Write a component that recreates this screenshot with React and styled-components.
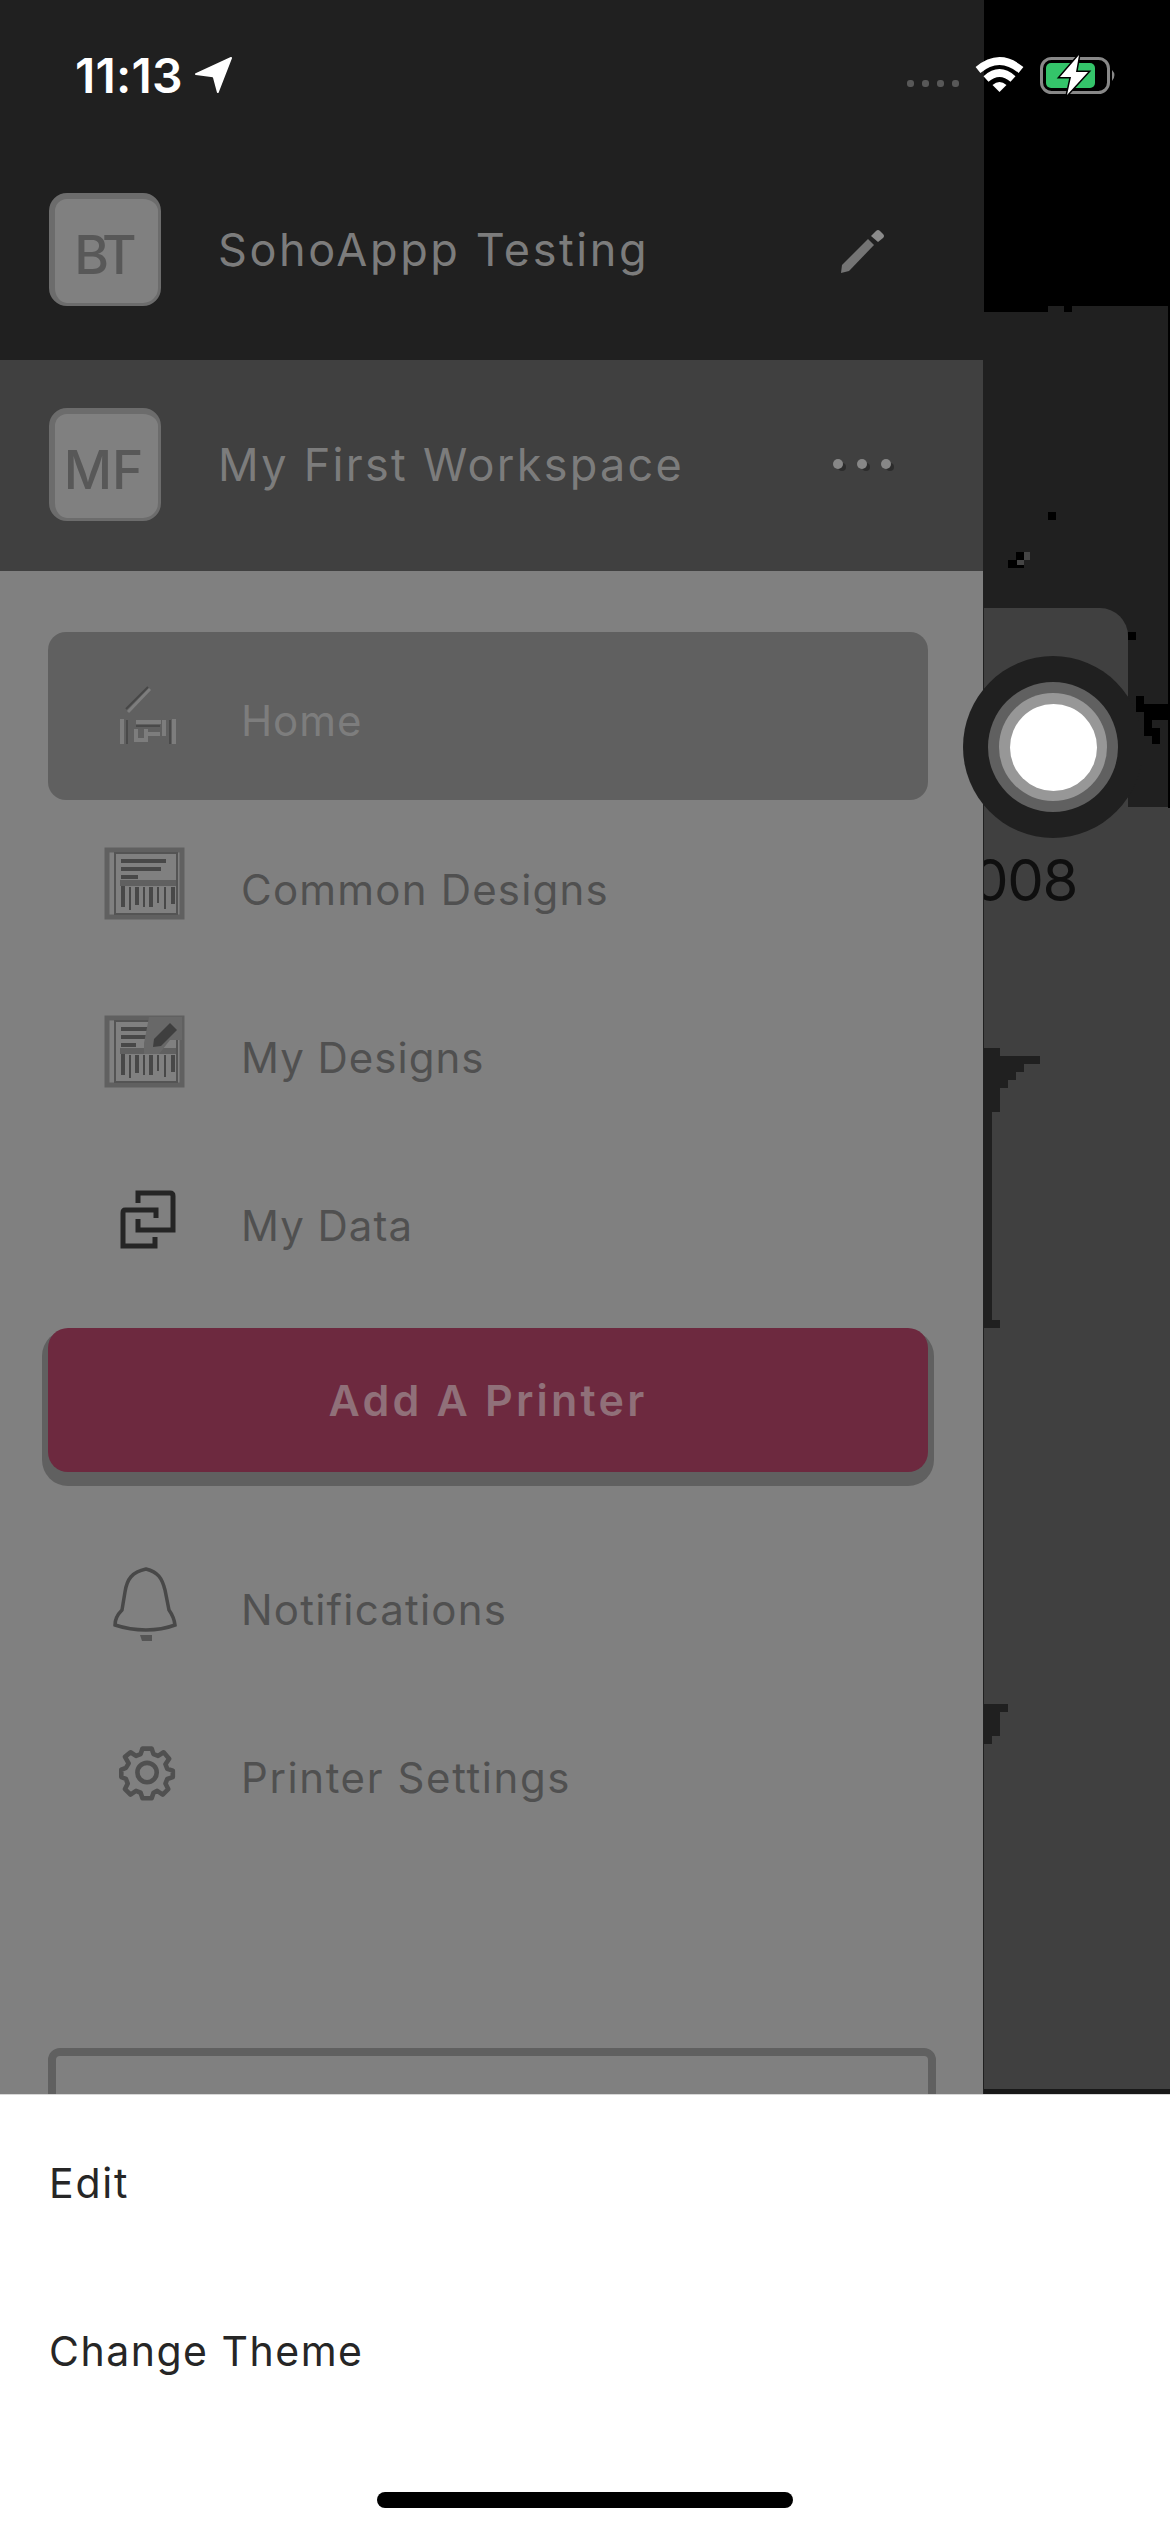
import React from "react";
import styled, { createGlobalStyle } from "styled-components";

const GlobalStyle = createGlobalStyle`
  * { box-sizing: border-box; }
  body { margin: 0; background: #ffffff; font-family: Inter, "Liberation Sans", sans-serif; }
`;

const Screen = styled.div`
  position: relative;
  width: 1170px;
  height: 2532px;
  display: flex;
  flex-direction: column;
  overflow: hidden;
`;

const Backdrop = styled.div`
  height: 2094px;
  display: grid;
  grid-template-columns: 983px 1fr;
  overflow: hidden;
`;

/* Status bar, floating over the drawer and the page behind it */
const StatusBar = styled.div`
  position: absolute;
  inset: 0 0 auto 0;
  height: 150px;
  padding: 0 52px 0 75px;
  display: flex;
  align-items: center;
  justify-content: space-between;
  color: #ffffff;
`;

const Clock = styled.div`
  display: flex;
  align-items: center;
  gap: 12px;
  font-size: 48px;
  font-weight: 600;
  letter-spacing: ${(p) => p.$spacing};
`;

const Indicators = styled.div`
  display: flex;
  align-items: center;
  gap: 16px;
`;

const SignalDots = styled.div`
  display: flex;
  gap: 8px;
  padding-top: 17px;
  i { width: 7px; height: 7px; border-radius: 3px; background: #585858; }
`;

const Drawer = styled.aside`
  display: flex;
  flex-direction: column;
  background: #808080;
  height: 2094px;
  overflow: hidden;
`;

const AccountBar = styled.header`
  flex: none;
  height: ${(p) => p.$height}px;
  padding: ${(p) => p.$top}px 0 0 49px;
  background: ${(p) => p.$bg};
  display: flex;
  align-items: flex-start;
`;

const Avatar = styled.div`
  flex: none;
  width: 112px;
  height: 113px;
  border-radius: 18px;
  border: 5px solid #6c6c6c;
  border-width: 6px 3px 3px 6px;
  background: #808080;
  color: #585858;
  display: flex;
  align-items: center;
  justify-content: center;
  font-size: 53px;
  font-weight: 500;
  letter-spacing: ${(p) => p.$spacing};
  padding: 8px 6px 0 0;
`;

const AccountName = styled.div`
  width: ${(p) => p.$width}px;
  margin-left: 57px;
  height: 112px;
  line-height: 114px;
  font-size: 45px;
  letter-spacing: ${(p) => p.$spacing};
  color: #7c7c7c;
  white-space: nowrap;
`;

const BarAction = styled.div`
  height: 114px;
  display: flex;
  align-items: center;
`;

const Nav = styled.nav`
  width: 880px;
  margin: 61px 0 0 48px;
  display: flex;
  flex-direction: column;
`;

const NavItem = styled.div`
  height: 168px;
  border-radius: 18px;
  background: ${(p) => (p.$active ? "#606060" : "transparent")};
  display: flex;
  align-items: center;
`;

const IconSlot = styled.div`
  width: 193px;
  height: 100%;
  padding-left: 56px;
  display: flex;
  align-items: center;
`;

const NavLabel = styled.span`
  font-size: 42px;
  letter-spacing: ${(p) => p.$spacing};
  color: ${(p) => (p.$active ? "#7d7d7d" : "#505050")};
  padding-top: ${(p) => (p.$active ? 9 : 11)}px;
  white-space: nowrap;
`;

const AddButton = styled.button`
  height: 144px;
  margin: 24px 0 48px;
  padding: 0 0 1px;
  border: 0;
  border-radius: 20px;
  background: #6d293f;
  box-shadow: 0 8px 0 6px #606060;
  clip-path: inset(0 -12px -24px -12px);
  color: #907079;
  font-family: inherit;
  font-size: 43px;
  font-weight: 600;
  letter-spacing: 3.2px;
`;

const OutlineButton = styled.div`
  flex: none;
  width: 888px;
  height: 120px;
  margin: 192px 0 0 48px;
  border: 8px solid #606060;
  border-radius: 12px;
`;

const PageBehind = styled.div`
  position: relative;
  display: flex;
  flex-direction: column;
  background: #404040;
  border-left: 1px solid #202020;
`;

const PageTop = styled.div`
  height: 306px;
  background: #000000;
`;

const PageHero = styled.div`
  height: 501px;
  background: #202020;
  display: flex;
  align-items: flex-end;
`;

const HeroCard = styled.div`
  width: 144px;
  height: 199px;
  background: #404040;
  border-radius: 0 28px 0 0;
`;

const PageNumber = styled.div`
  margin: 41px 0 0 -12px;
  font-size: 58px;
  line-height: 64px;
  color: #0f0f0f;
  letter-spacing: -1.4px;
  clip-path: inset(0 0 0 12px);
`;

const Artwork = styled.svg`
  position: absolute;
  left: 0;
  top: 0;
`;

const TouchHalo = styled.div`
  position: absolute;
  left: 963px;
  top: 656px;
  width: 180px;
  height: 182px;
  border-radius: 50%;
  background: #202020;
  display: grid;
  place-items: center;
`;

const TouchRing = styled.div`
  width: ${(p) => p.$size}px;
  height: ${(p) => p.$size}px;
  border-radius: 50%;
  background: ${(p) => p.$bg};
  display: grid;
  place-items: center;
`;

const Sheet = styled.section`
  height: 438px;
  background: #ffffff;
  border-top: 1px solid #d8d8d8;
  display: flex;
  flex-direction: column;
`;

const SheetOption = styled.div`
  height: 168px;
  padding: 8px 0 0 49px;
  display: flex;
  align-items: center;
  font-size: 41px;
  letter-spacing: ${(p) => p.$spacing};
  color: #262626;
`;

const HomeIndicator = styled.div`
  width: 416px;
  height: 16px;
  margin: 61px 0 0 377px;
  border-radius: 8px;
  background: #000000;
`;

const LocationIcon = () => (
  <svg width="38" height="38" viewBox="0 0 40 38">
    <path d="M38 1 L24 37 L20 22 Q20 20 17 20 L1 18 Z" fill="#fff" stroke="#fff" strokeWidth="2" strokeLinejoin="round" />
  </svg>
);

const WifiIcon = () => (
  <svg width="49" height="36" viewBox="0 0 49 36">
    <g fill="none" stroke="#fff" strokeWidth="7.500">
      <path d="M3 13 Q24.500 -5 46 13" />
      <path d="M11 22 Q24.500 10 38 22" />
    </g>
    <path d="M17.500 28 Q24.500 22 31.500 28 L24.500 35 Z" fill="#fff" />
  </svg>
);

const BatteryIcon = () => (
  <svg width="78" height="48" viewBox="0 0 78 48">
    <rect x="1.500" y="7.500" width="67" height="34" rx="10" fill="none" stroke="#888" strokeWidth="3" />
    <rect x="6" y="12" width="49" height="25" rx="5" fill="#34c46a" />
    <path d="M72 19 Q77 24 72 30 Z" fill="#888" />
    <path d="M39 4 L20 26 H31 L27 44 L48 21 H36 Z" fill="#fff" stroke="#000" strokeWidth="3" paintOrder="stroke" />
  </svg>
);

const PencilIcon = () => (
  <svg width="47" height="47" viewBox="0 0 47 47">
    <path d="M2 46 L3 38 L29 12 L35 18 L10 44 Z" fill="#747474" />
    <path d="M32 9 L37 4 Q39 2 41 4 L44 7 Q46 9 44 11 L39 15 Z" fill="#8a8a8a" />
  </svg>
);

const MoreIcon = () => (
  <svg width="62" height="16" viewBox="0 0 62 16">
    {[6, 30, 54].map((x) => (
      <g key={x}>
        <circle cx={x + 4} cy="10" r="4" fill="#2c2c2c" />
        <circle cx={x} cy="7" r="5" fill="#878787" />
      </g>
    ))}
  </svg>
);

const HomeIcon = () => (
  <svg width="80" height="72" viewBox="0 0 80 72" fill="none">
    <path d="M24 32 L46 9" stroke="#7d7d7d" strokeWidth="3" />
    <path d="M22 29 L44 7" stroke="#464646" strokeWidth="2" />
    <g stroke="#7d7d7d" strokeWidth="4">
      <path d="M18 39 V64 M70 39 V64 M60 40 V56 M32 42 H57 M44 54 H56" />
      <path d="M32 49 V60 H42 V49" />
    </g>
    <path d="M23 40 V64 M66 40 V64 M32 46 H56" stroke="#4a4a4a" strokeWidth="2" />
  </svg>
);

const LabelIcon = ({ edited }) => (
  <svg width="82" height="74" viewBox="0 0 82 74" fill="none">
    <rect x="3" y="3" width="75" height="67" stroke="#606060" strokeWidth="5" />
    <rect x="11" y="6" width="62" height="61" stroke="#545454" strokeWidth="2" />
    <path d={edited ? "M17 14 H46 M17 22 H43 M17 30 H32" : "M17 14 H62 M17 22 H57 M17 30 H34"} stroke="#484848" strokeWidth="4" />
    <path d="M16 36 H72" stroke="#606060" strokeWidth="6" />
    <path d="M19 39 V60 M33 40 V58 M47 40 V60 M69 40 V57" stroke="#484848" strokeWidth="4" />
    <path d="M26 40 V63 M40 40 V60 M54 40 V56 M61 40 V62" stroke="#484848" strokeWidth="2" />
    {edited && (
      <>
        <path d="M45 2 H78 V25 H66 L55 39 H40 V28 Z" fill="#686868" />
        <path d="M49 32 L50 24 L66 8 L73 15 L57 31 Z" fill="#3f3f3f" />
      </>
    )}
  </svg>
);

const LinkIcon = () => (
  <svg width="80" height="64" viewBox="0 0 80 64" fill="none" stroke="#252525" strokeWidth="5">
    <path d="M34 15 V5 H66 Q69 5 69 8 V42 H34 V31" />
    <path d="M52 30 V22 H21 Q19 22 19 25 V58 H51 V49" />
  </svg>
);

const BellIcon = () => (
  <svg width="80" height="80" viewBox="0 0 80 80" fill="none" stroke="#484848" strokeWidth="3.500">
    <path d="M42 5 C28 8 23 15 21 28 L18 46 Q11 53 11 61 Q26 66 42 66 Q58 66 71 61 Q70 53 65 46 L61 26 C58 14 54 8 42 5 Z" />
    <path d="M36 71 H48 V77 H38 Z" fill="#555555" stroke="none" />
  </svg>
);

const GearIcon = () => (
  <svg width="80" height="64" viewBox="0 0 80 64" fill="none" stroke="#505050" strokeWidth="5">
    <g transform="translate(3.500 4) scale(0.920 0.920)">
      <circle cx="43" cy="31" r="10.500" />
      <path strokeLinejoin="round" d="M38 5 H48 L50 11 L55 13 L61 9 L67 16 L63 22 L65 27 L71 29 V36 L65 38 L63 43 L66 49 L60 55 L54 51 L50 53 L48 59 H38 L36 53 L31 51 L25 55 L19 49 L22 43 L20 38 L15 36 V28 L20 26 L23 21 L19 14 L25 9 L31 13 L36 11 Z" />
    </g>
  </svg>
);

const primaryItems = [
  { label: "Home", icon: <HomeIcon />, active: true, spacing: "0.9px" },
  { label: "Common Designs", icon: <LabelIcon />, spacing: "1.2px" },
  { label: "My Designs", icon: <LabelIcon edited />, spacing: "1px" },
  { label: "My Data", icon: <LinkIcon />, spacing: "1px" },
];

const secondaryItems = [
  { label: "Notifications", icon: <BellIcon />, spacing: "1.2px" },
  { label: "Printer Settings", icon: <GearIcon />, spacing: "1.6px" },
];

const renderItem = (item) => (
  <NavItem key={item.label} $active={item.active}>
    <IconSlot>{item.icon}</IconSlot>
    <NavLabel $active={item.active} $spacing={item.spacing}>{item.label}</NavLabel>
  </NavItem>
);

export default function App() {
  return (
    <Screen>
      <GlobalStyle />
      <Backdrop>
        <Drawer>
          <AccountBar $height={360} $top={193} $bg="#202020">
            <Avatar $spacing="-4px">BT</Avatar>
            <AccountName $width={621} $spacing="2.6px">SohoAppp Testing</AccountName>
            <BarAction><PencilIcon /></BarAction>
          </AccountBar>
          <AccountBar $height={211} $top={48} $bg="#404040">
            <Avatar $spacing="0px">MF</Avatar>
            <AccountName $width={614} $spacing="2.3px">My First Workspace</AccountName>
            <BarAction><MoreIcon /></BarAction>
          </AccountBar>
          <Nav>
            {primaryItems.map(renderItem)}
            <AddButton>Add A Printer</AddButton>
            {secondaryItems.map(renderItem)}
          </Nav>
          <OutlineButton />
        </Drawer>
        <PageBehind>
          <PageTop />
          <PageHero><HeroCard /></PageHero>
          <PageNumber>008</PageNumber>
          <Artwork width="186" height="2094" viewBox="984 0 186 2094">
            <g fill="#202020">
              <path d="M984 1048 H1000 V1056 H1040 V1064 H1024 V1072 H1016 V1080 H1008 V1088 H1000 V1112 H992 V1320 H1000 V1328 H984 Z" />
              <path d="M984 1704 H1008 V1712 H1000 V1736 H992 V1744 H984 Z" />
            </g>
            <path d="M984 304 h64 v8 h-64 Z M1064 304 h8 v8 h-8 Z" fill="#000" />
            <path d="M1048 512 h8 v8 h-8 Z M1008 560 h16 v8 h-16 Z M1016 552 h8 v8 h-8 Z M1128 632 h8 v8 h-8 Z M1136 696 h8 v8 h26 v16 h-18 v8 h8 v16 h-8 v-8 h-8 v-24 h-8 Z M1168 304 h2 v504 h-2 Z" fill="#000" />
            <path d="M1024 552 h6 v8 h-6 v5 h-7 v-5 h7 Z" fill="#454545" />
            <path d="M984 2089 h186 v5 h-186 Z" fill="#181818" />
          </Artwork>
        </PageBehind>
      </Backdrop>
      <Sheet>
        <SheetOption $spacing="1.8px">Edit</SheetOption>
        <SheetOption $spacing="1.5px">Change Theme</SheetOption>
        <HomeIndicator />
      </Sheet>
      <TouchHalo>
        <TouchRing $size={130} $bg="#606060">
          <TouchRing $size={108} $bg="#979797">
            <TouchRing $size={87} $bg="#ffffff" />
          </TouchRing>
        </TouchRing>
      </TouchHalo>
      <StatusBar>
        <Clock $spacing="0.2px">
          <span>11:13</span>
          <LocationIcon />
        </Clock>
        <Indicators>
          <SignalDots><i /><i /><i /><i /></SignalDots>
          <WifiIcon />
          <BatteryIcon />
        </Indicators>
      </StatusBar>
    </Screen>
  );
}
